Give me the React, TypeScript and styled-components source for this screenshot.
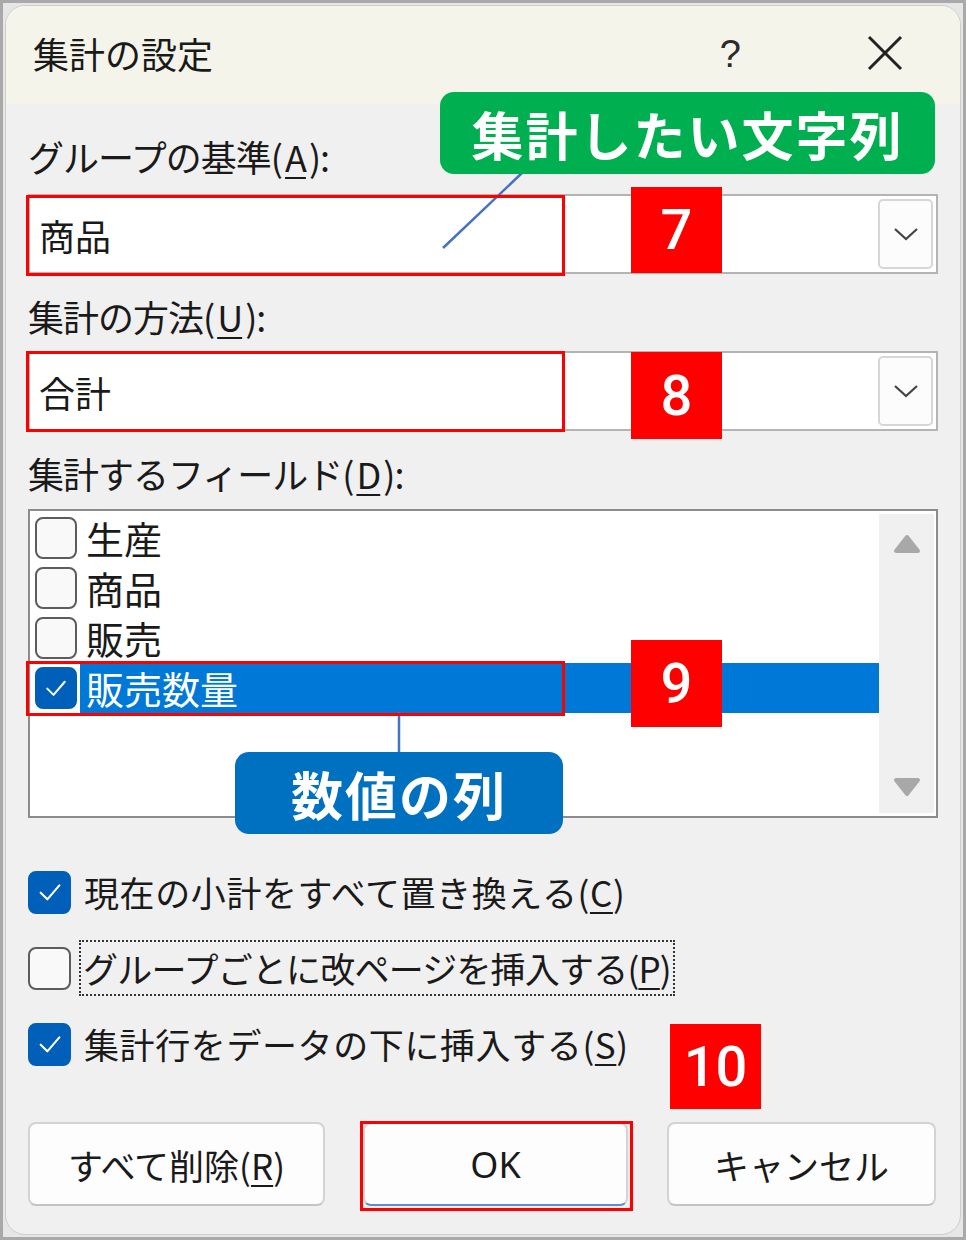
import React from 'react'
import styled, { createGlobalStyle } from 'styled-components'

const GlobalStyle = createGlobalStyle`
	body {
		margin: 0;
		background: #ffffff;
		font-family: "Noto Sans CJK JP", "Noto Sans", sans-serif;
		color: #1a1a1a;
	}
`

const Page = styled.div`
	position: relative;
	width: 966px;
	height: 1240px;
	box-sizing: border-box;
	border: 3px solid #a9a9a9;
	background: #e6e6e6;
	padding: 2px;
`

const Dialog = styled.div`
	height: 100%;
	box-sizing: border-box;
	border: 1px solid #cdcdcd;
	border-radius: 20px;
	overflow: hidden;
	background: #f0f0f0;
	display: flex;
	flex-direction: column;
`

const TitleBar = styled.div`
	height: 98px;
	flex-shrink: 0;
	background: #f4f4ea;
	display: flex;
	align-items: center;
	padding: 0 57px 0 27px;
`

const Title = styled.div`
	font-size: 36px;
	line-height: 40px;
	flex: 1;
	margin-top: -4px;
`

const HelpMark = styled.div`
	font-family: "Liberation Sans", sans-serif;
	font-size: 38px;
	color: #2a2a2a;
	margin-right: 126px;
	margin-top: -2px;
`

const CloseMark = styled.svg`
	width: 36px;
	height: 36px;
	margin-top: -4px;
`

const Body = styled.div`
	padding: 32px 22px 0 22px;
	display: flex;
	flex-direction: column;
`

const Label = styled.div<{ $gap: number }>`
	font-size: 36px;
	line-height: 40px;
	height: 40px;
	margin-top: ${(p) => p.$gap}px;
	letter-spacing: -1px;

	u {
		text-underline-offset: 5px;
		text-decoration-thickness: 2px;
		padding: 0 3px;
	}
`

const Combo = styled.div<{ $gap: number }>`
	height: 80px;
	box-sizing: border-box;
	margin-top: ${(p) => p.$gap}px;
	border: 2px solid #b4b4b4;
	background: #ffffff;
	display: flex;
	align-items: center;
`

const ComboText = styled.div`
	flex: 1;
	font-size: 36px;
	padding-left: 9px;
	padding-top: 2px;
`

const DropButton = styled.div`
	width: 55px;
	height: 70px;
	box-sizing: border-box;
	margin-right: 3px;
	border: 2px solid #d6d6d6;
	border-radius: 5px;
	background: #fcfcfc;
	display: flex;
	align-items: center;
	justify-content: center;
`

const ListBox = styled.div`
	margin-top: 16px;
	height: 309px;
	box-sizing: border-box;
	border: 2px solid #8c8c8c;
	background: #ffffff;
	display: flex;
`

const Items = styled.div`
	flex: 1;
	padding: 2px 0 0 5px;
	display: flex;
	flex-direction: column;
`

const Item = styled.div`
	height: 50px;
	display: flex;
	align-items: center;
`

const Box = styled.div<{ $checked?: boolean; $size: number }>`
	width: ${(p) => p.$size}px;
	height: ${(p) => p.$size}px;
	box-sizing: border-box;
	flex-shrink: 0;
	border-radius: 8px;
	border: 2px solid ${(p) => (p.$checked ? '#005fb8' : '#5c5c5c')};
	background: ${(p) => (p.$checked ? '#005fb8' : '#f9f9f9')};
	display: flex;
	align-items: center;
	justify-content: center;
`

const ItemText = styled.div<{ $selected?: boolean }>`
	flex: 1;
	height: 50px;
	margin-left: 3px;
	padding-left: 6px;
	font-size: 38px;
	line-height: 50px;
	color: ${(p) => (p.$selected ? '#ffffff' : '#1a1a1a')};
	background: ${(p) => (p.$selected ? '#0078d7' : 'transparent')};
`

const ScrollBar = styled.div`
	width: 55px;
	margin: 3px 2px 3px 0;
	background: #f0f0f0;
	display: flex;
	flex-direction: column;
	justify-content: space-between;
	align-items: center;
	padding: 20px 0 16px;
	box-sizing: border-box;
`

const Checks = styled.div`
	margin-top: 49px;
	display: flex;
	flex-direction: column;
	gap: 26px;
`

const CheckRow = styled.div`
	height: 50px;
	display: flex;
	align-items: center;
`

const CheckText = styled.div<{ $focus?: boolean }>`
	font-size: 35px;
	line-height: 52px;
	margin-left: ${(p) => (p.$focus ? 8 : 13)}px;
	padding: 0 ${(p) => (p.$focus ? 2 : 0)}px;
	border: ${(p) => (p.$focus ? '2px dotted #333' : 'none')};
	letter-spacing: ${(p) => (p.$focus ? -0.8 : 0.6)}px;

	u {
		text-underline-offset: 5px;
		text-decoration-thickness: 2px;
	}
`

const Buttons = styled.div`
	margin-top: 53px;
	display: flex;
`

const Button = styled.div<{ $w: number; $gap: number; $primary?: boolean }>`
	width: ${(p) => p.$w}px;
	height: 84px;
	margin-left: ${(p) => p.$gap}px;
	box-sizing: border-box;
	border: 2px solid #d3d3d3;
	border-bottom-color: ${(p) => (p.$primary ? '#5a8fd0' : '#c4c4c4')};
	border-radius: 8px;
	background: #fdfdfd;
	display: flex;
	align-items: center;
	justify-content: center;
	font-size: 35px;

	u {
		text-underline-offset: 5px;
		text-decoration-thickness: 2px;
	}
`

const OkText = styled.span`
	font-family: "Noto Sans", sans-serif;
	font-size: 36px;
`

const RedBox = styled.div<{ $x: number; $y: number; $w: number; $h: number }>`
	position: absolute;
	left: ${(p) => p.$x - 3}px;
	top: ${(p) => p.$y - 3}px;
	width: ${(p) => p.$w}px;
	height: ${(p) => p.$h}px;
	box-sizing: border-box;
	border: 3px solid #ff0000;
`

const Badge = styled.div<{ $x: number; $y: number; $h: number }>`
	position: absolute;
	left: ${(p) => p.$x - 3}px;
	top: ${(p) => p.$y - 3}px;
	width: 91px;
	height: ${(p) => p.$h}px;
	background: #ff0000;
	color: #ffffff;
	font-family: Roboto, "Liberation Sans", sans-serif;
	font-weight: 500;
	font-size: 56px;
	display: flex;
	align-items: center;
	justify-content: center;
`

const Callout = styled.div<{ $x: number; $y: number; $w: number; $bg: string }>`
	position: absolute;
	left: ${(p) => p.$x - 3}px;
	top: ${(p) => p.$y - 3}px;
	width: ${(p) => p.$w}px;
	height: 82px;
	border-radius: 14px;
	background: ${(p) => p.$bg};
	color: #ffffff;
	font-weight: 700;
	font-size: 52px;
	letter-spacing: 2px;
	display: flex;
	align-items: center;
	justify-content: center;
`

const Leaders = styled.svg`
	position: absolute;
	left: -3px;
	top: -3px;
	width: 966px;
	height: 1240px;
	pointer-events: none;
`

const Tick = ({ size }: { size: number }) => (
	<svg width={size} height={size} viewBox="0 0 24 24">
		<polyline points="5,12.5 10,17.5 19,7" fill="none" stroke="#ffffff" strokeWidth="1.6" strokeLinejoin="round" strokeLinecap="round" />
	</svg>
)

const Chevron = () => (
	<svg width="26" height="16" viewBox="0 0 26 16">
		<polyline points="2,3 13,13 24,3" fill="none" stroke="#444" strokeWidth="2.2" />
	</svg>
)

const Arrow = ({ down }: { down?: boolean }) => (
	<svg width="28" height="20" viewBox="0 0 28 20">
		<polygon
			points={down ? '3,3 25,3 14,17' : '3,17 25,17 14,3'}
			fill="#a8a8a8"
			stroke="#a8a8a8"
			strokeWidth="4"
			strokeLinejoin="round"
		/>
	</svg>
)

const fields = [
	{ name: '生産', checked: false },
	{ name: '商品', checked: false },
	{ name: '販売', checked: false },
	{ name: '販売数量', checked: true },
]

export default function App() {
	return (
		<Page>
			<GlobalStyle />
			<Dialog>
				<TitleBar>
					<Title>集計の設定</Title>
					<HelpMark>?</HelpMark>
					<CloseMark viewBox="0 0 36 36">
						<line x1="2" y1="2" x2="34" y2="34" stroke="#222" strokeWidth="3" />
						<line x1="34" y1="2" x2="2" y2="34" stroke="#222" strokeWidth="3" />
					</CloseMark>
				</TitleBar>
				<Body>
					<Label $gap={0}>グループの基準(<u>A</u>):</Label>
					<Combo $gap={18}>
						<ComboText>商品</ComboText>
						<DropButton><Chevron /></DropButton>
					</Combo>
					<Label $gap={22}>集計の方法(<u>U</u>):</Label>
					<Combo $gap={15}>
						<ComboText>合計</ComboText>
						<DropButton><Chevron /></DropButton>
					</Combo>
					<Label $gap={22}>集計するフィールド(<u>D</u>):</Label>
					<ListBox>
						<Items>
							{fields.map((f) => (
								<Item key={f.name}>
									<Box $size={42} $checked={f.checked}>{f.checked && <Tick size={30} />}</Box>
									<ItemText $selected={f.checked}>{f.name}</ItemText>
								</Item>
							))}
						</Items>
						<ScrollBar>
							<Arrow />
							<Arrow down />
						</ScrollBar>
					</ListBox>
					<Checks>
						<CheckRow>
							<Box $size={43} $checked><Tick size={32} /></Box>
							<CheckText>現在の小計をすべて置き換える(<u>C</u>)</CheckText>
						</CheckRow>
						<CheckRow>
							<Box $size={43} />
							<CheckText $focus>グループごとに改ページを挿入する(<u>P</u>)</CheckText>
						</CheckRow>
						<CheckRow>
							<Box $size={43} $checked><Tick size={32} /></Box>
							<CheckText>集計行をデータの下に挿入する(<u>S</u>)</CheckText>
						</CheckRow>
					</Checks>
					<Buttons>
						<Button $w={297} $gap={0}>すべて削除(<u>R</u>)</Button>
						<Button $w={265} $gap={38} $primary><OkText>OK</OkText></Button>
						<Button $w={269} $gap={39}>キャンセル</Button>
					</Buttons>
				</Body>
			</Dialog>

			<Leaders viewBox="0 0 966 1240">
				<line x1="443" y1="248" x2="523" y2="172" stroke="#4472c4" strokeWidth="2.5" />
				<line x1="399" y1="712" x2="399" y2="752" stroke="#4472c4" strokeWidth="2.5" />
			</Leaders>

			<RedBox $x={26} $y={195} $w={539} $h={81} />
			<RedBox $x={26} $y={351} $w={539} $h={81} />
			<RedBox $x={26} $y={661} $w={539} $h={55} />
			<RedBox $x={360} $y={1121} $w={273} $h={90} />

			<Badge $x={631} $y={187} $h={86}>7</Badge>
			<Badge $x={631} $y={352} $h={87}>8</Badge>
			<Badge $x={631} $y={640} $h={87}>9</Badge>
			<Badge $x={670} $y={1024} $h={85}>10</Badge>

			<Callout $x={440} $y={92} $w={495} $bg="#00b050">集計したい文字列</Callout>
			<Callout $x={235} $y={752} $w={328} $bg="#0070c0">数値の列</Callout>
		</Page>
	)
}
